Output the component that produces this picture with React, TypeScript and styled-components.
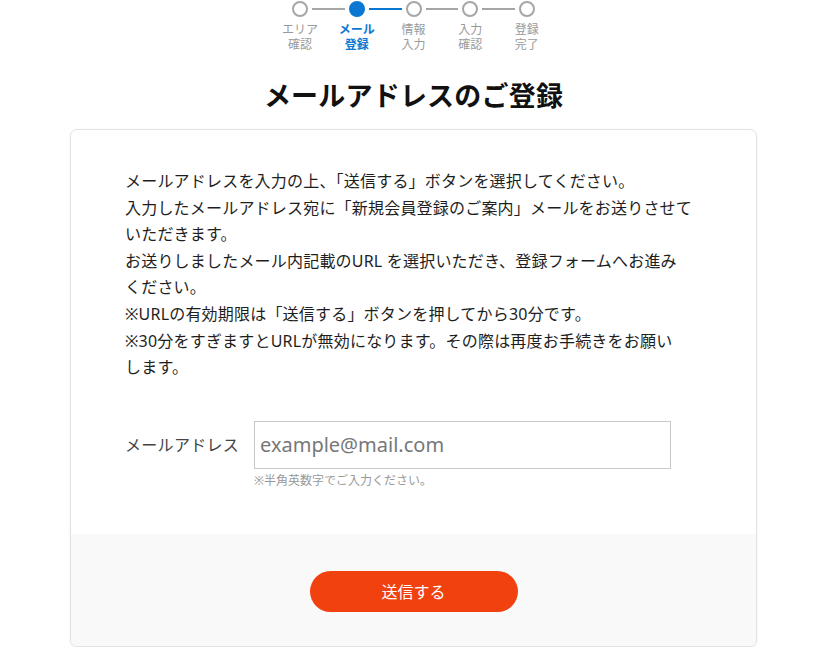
import styled, { createGlobalStyle } from 'styled-components';

const GlobalStyle = createGlobalStyle`
  html, body {
    margin: 0;
    padding: 0;
    background: #fff;
  }
  body {
    font-family: "Noto Sans", "Noto Sans CJK JP", sans-serif;
    color: #222;
  }
`;

const Page = styled.div`
  width: 827px;
  display: flex;
  flex-direction: column;
  align-items: center;
`;

const Stepper = styled.ol`
  list-style: none;
  margin: 0;
  padding: 1px 0 0;
  display: flex;
`;

const Step = styled.li`
  width: 56.7px;
  display: flex;
  flex-direction: column;
  align-items: center;
`;

const Track = styled.div`
  width: 100%;
  height: 16px;
  display: flex;
  align-items: center;
`;

const Line = styled.span<{ $state: 'none' | 'gray' | 'blue' }>`
  flex: 1;
  height: 2px;
  background: ${p => (p.$state === 'blue' ? '#0a78d2' : p.$state === 'gray' ? '#a6a6a6' : 'transparent')};
`;

const Dot = styled.span<{ $active?: boolean }>`
  box-sizing: border-box;
  width: 16px;
  height: 16px;
  margin: 0 4px;
  border-radius: 50%;
  border: 2px solid ${p => (p.$active ? '#0a78d2' : '#a6a6a6')};
  background: ${p => (p.$active ? '#0a78d2' : '#fff')};
`;

const StepLabel = styled.span<{ $active?: boolean }>`
  margin-top: 6px;
  display: flex;
  flex-direction: column;
  align-items: center;
  font-family: "Liberation Sans", "Noto Sans CJK JP", sans-serif;
  font-size: 12px;
  color: ${p => (p.$active ? '#0a78d2' : '#9a9a9a')};
  font-weight: ${p => (p.$active ? 700 : 400)};
`;

const LabelLine = styled.span`
  display: block;
  height: 15px;
  line-height: 15px;
`;

const Title = styled.h1`
  margin: 27px 0 17px;
  font-size: 27px;
  line-height: 32px;
  font-weight: 700;
  color: #111;
  letter-spacing: 0.2px;
`;

const Card = styled.section`
  box-sizing: border-box;
  width: 687px;
  border: 1px solid #e3e3e3;
  border-radius: 7px;
  box-shadow: 0 1px 3px rgba(0, 0, 0, 0.06);
  overflow: hidden;
  background: #fff;
`;

const CardBody = styled.div`
  padding: 38px 54px 45px;
`;

const Lead = styled.p`
  margin: 0;
  font-size: 16px;
  line-height: 26.6px;
  color: #1e1e1e;
  letter-spacing: 0.2px;
`;

const FormRow = styled.div`
  margin-top: 40px;
  display: flex;
  align-items: flex-start;
`;

const FieldLabel = styled.label`
  width: 129px;
  font-size: 16px;
  line-height: 48px;
  color: #444;
  letter-spacing: 0.3px;
`;

const Field = styled.div`
  display: flex;
  flex-direction: column;
`;

const Input = styled.input`
  box-sizing: border-box;
  width: 417px;
  height: 48px;
  padding: 0 5px;
  border: 1px solid #c8c8c8;
  font-family: "Noto Sans", "Noto Sans CJK JP", sans-serif;
  font-size: 20px;
  color: #333;
  outline: none;
  &::placeholder {
    color: #777;
  }
`;

const Hint = styled.span`
  margin-top: 4px;
  font-size: 12px;
  line-height: 16px;
  color: #999;
`;

const CardFooter = styled.div`
  background: #f9f9f9;
  padding: 37px 0 34px;
  display: flex;
  justify-content: center;
`;

const Submit = styled.button`
  width: 208px;
  height: 41px;
  border: none;
  border-radius: 21px;
  background: #f0410f;
  color: #fff;
  font-family: "Noto Sans", "Noto Sans CJK JP", sans-serif;
  font-size: 16px;
  cursor: pointer;
`;

const steps = [
  ['エリア', '確認'],
  ['メール', '登録'],
  ['情報', '入力'],
  ['入力', '確認'],
  ['登録', '完了'],
];
const current = 1;

const lines = [
  'メールアドレスを入力の上、「送信する」ボタンを選択してください。',
  '入力したメールアドレス宛に「新規会員登録のご案内」メールをお送りさせて',
  'いただきます。',
  'お送りしましたメール内記載のURL を選択いただき、登録フォームへお進み',
  'ください。',
  '※URLの有効期限は「送信する」ボタンを押してから30分です。',
  '※30分をすぎますとURLが無効になります。その際は再度お手続きをお願い',
  'します。',
];

export default function App() {
  return (
    <Page>
      <GlobalStyle />
      <Stepper>
        {steps.map((s, i) => (
          <Step key={i}>
            <Track>
              <Line $state={i === 0 ? 'none' : i === current + 1 ? 'blue' : 'gray'} />
              <Dot $active={i === current} />
              <Line $state={i === steps.length - 1 ? 'none' : i === current ? 'blue' : 'gray'} />
            </Track>
            <StepLabel $active={i === current}>
              <LabelLine>{s[0]}</LabelLine>
              <LabelLine>{s[1]}</LabelLine>
            </StepLabel>
          </Step>
        ))}
      </Stepper>
      <Title>メールアドレスのご登録</Title>
      <Card>
        <CardBody>
          <Lead>
            {lines.map((l, i) => (
              <span key={i}>
                {l}
                {i < lines.length - 1 && <br />}
              </span>
            ))}
          </Lead>
          <FormRow>
            <FieldLabel htmlFor="mail">メールアドレス</FieldLabel>
            <Field>
              <Input id="mail" type="email" placeholder="example@mail.com" />
              <Hint>※半角英数字でご入力ください。</Hint>
            </Field>
          </FormRow>
        </CardBody>
        <CardFooter>
          <Submit type="button">送信する</Submit>
        </CardFooter>
      </Card>
    </Page>
  );
}
